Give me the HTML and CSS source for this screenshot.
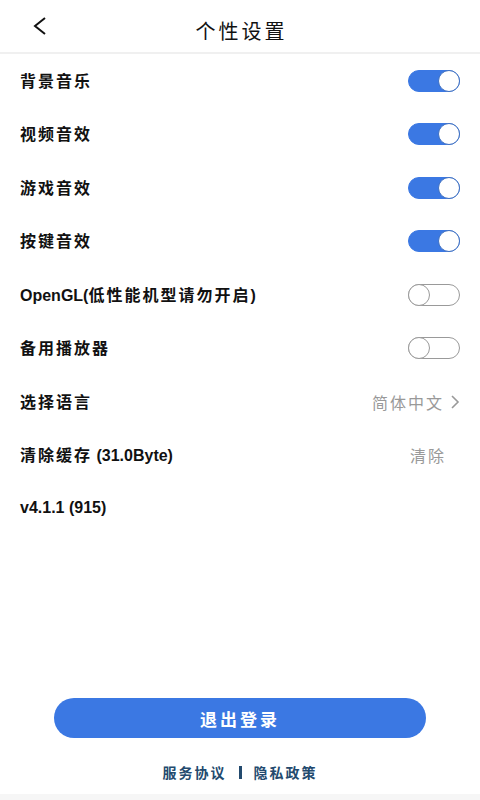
FILE: index.html
```html
<!DOCTYPE html>
<html>
<head>
    <meta charset="UTF-8">
    <title>个性设置</title>
    <meta name="viewport" content="width=device-width, initial-scale=1.0">
    <link rel="stylesheet" href="styles.css">
</head>
<body>
    <div class="page">
        <div class="header">
            <svg class="back" width="16" height="20" viewBox="0 0 16 20">
                <path d="M13 2 L3 10 L13 18" fill="none" stroke="#111" stroke-width="2"/>
            </svg>
            <div class="title">个性设置</div>
        </div>

        <div class="list">
            <div class="row">
                <span class="label">背景音乐</span>
                <span class="switch on"><span class="knob"></span></span>
            </div>
            <div class="row">
                <span class="label">视频音效</span>
                <span class="switch on"><span class="knob"></span></span>
            </div>
            <div class="row">
                <span class="label">游戏音效</span>
                <span class="switch on"><span class="knob"></span></span>
            </div>
            <div class="row">
                <span class="label">按键音效</span>
                <span class="switch on"><span class="knob"></span></span>
            </div>
            <div class="row">
                <span class="label"><span class="latin">OpenGL(</span>低性能机型请勿开启<span class="latin">)</span></span>
                <span class="switch"><span class="knob"></span></span>
            </div>
            <div class="row">
                <span class="label">备用播放器</span>
                <span class="switch"><span class="knob"></span></span>
            </div>
            <div class="row">
                <span class="label">选择语言</span>
                <span class="value">简体中文
                    <svg class="arrow" width="10" height="16" viewBox="0 0 10 16">
                        <path d="M2 2 L8 8 L2 14" fill="none" stroke="#999" stroke-width="1.6"/>
                    </svg>
                </span>
            </div>
            <div class="row">
                <span class="label">清除缓存<span class="latin"> (31.0Byte)</span></span>
                <span class="value clear">清除</span>
            </div>
            <div class="row">
                <span class="label latin">v4.1.1 (915)</span>
            </div>
        </div>

        <div class="footer">
            <button class="logout">退出登录</button>
            <div class="links">
                <a>服务协议</a>
                <span class="sep"></span>
                <a>隐私政策</a>
            </div>
            <div class="strip"></div>
        </div>
    </div>
</body>
</html>
```

FILE: styles.css
```css
body {
    margin: 0;
    font-family: "Liberation Sans", "Noto Sans CJK SC", sans-serif;
    background-color: #fff;
    color: #111;
}
.page {
    height: 800px;
    display: flex;
    flex-direction: column;
}
.header {
    height: 52px;
    border-bottom: 2px solid #f0f0f0;
    display: flex;
    align-items: center;
    justify-content: center;
    position: relative;
}
.back {
    position: absolute;
    left: 32px;
    top: 16px;
}
.title {
    font-size: 20px;
    letter-spacing: 3px;
    margin-top: 8px;
    margin-left: 3px;
}
.list {
    flex: 1;
}
.row {
    height: 53.5px;
    display: flex;
    align-items: center;
    justify-content: space-between;
    padding: 0 20px;
}
.label {
    font-size: 16px;
    font-weight: bold;
    letter-spacing: 2px;
    margin-top: -2px;
}
.latin {
    letter-spacing: 0;
    font-size: 16px;
}
.switch {
    width: 52px;
    height: 22px;
    border-radius: 12px;
    border: 1px solid #9a9a9a;
    box-sizing: border-box;
    position: relative;
    background-color: #fff;
}
.switch .knob {
    position: absolute;
    top: -1px;
    left: -1px;
    width: 22px;
    height: 22px;
    border-radius: 50%;
    border: 1px solid #9a9a9a;
    box-sizing: border-box;
    background-color: #fff;
}
.switch.on {
    background-color: #3b78e3;
    border-color: #3b78e3;
}
.switch.on .knob {
    left: auto;
    right: -1px;
    border-color: #3f70c0;
}
.value {
    color: #999;
    font-size: 16px;
    letter-spacing: 2px;
    display: flex;
    align-items: center;
    gap: 6px;
}
.value.clear {
    margin-right: 14px;
}
.footer {
    display: flex;
    flex-direction: column;
    align-items: center;
}
.logout {
    width: 372px;
    height: 40px;
    border: none;
    border-radius: 20px;
    background-color: #3b78e3;
    color: #fff;
    font-family: "Noto Sans CJK SC", sans-serif;
    font-size: 17px;
    font-weight: bold;
    letter-spacing: 3px;
    padding-left: 6px;
}
.links {
    margin-top: 24px;
    display: flex;
    align-items: center;
    gap: 12px;
    color: #234a6e;
    font-size: 14px;
    font-weight: bold;
    letter-spacing: 2px;
}
.sep {
    width: 3px;
    height: 13px;
    background-color: #234a6e;
}
.strip {
    margin-top: 12px;
    height: 6px;
    width: 100%;
    background-color: #f6f6f6;
}
```
